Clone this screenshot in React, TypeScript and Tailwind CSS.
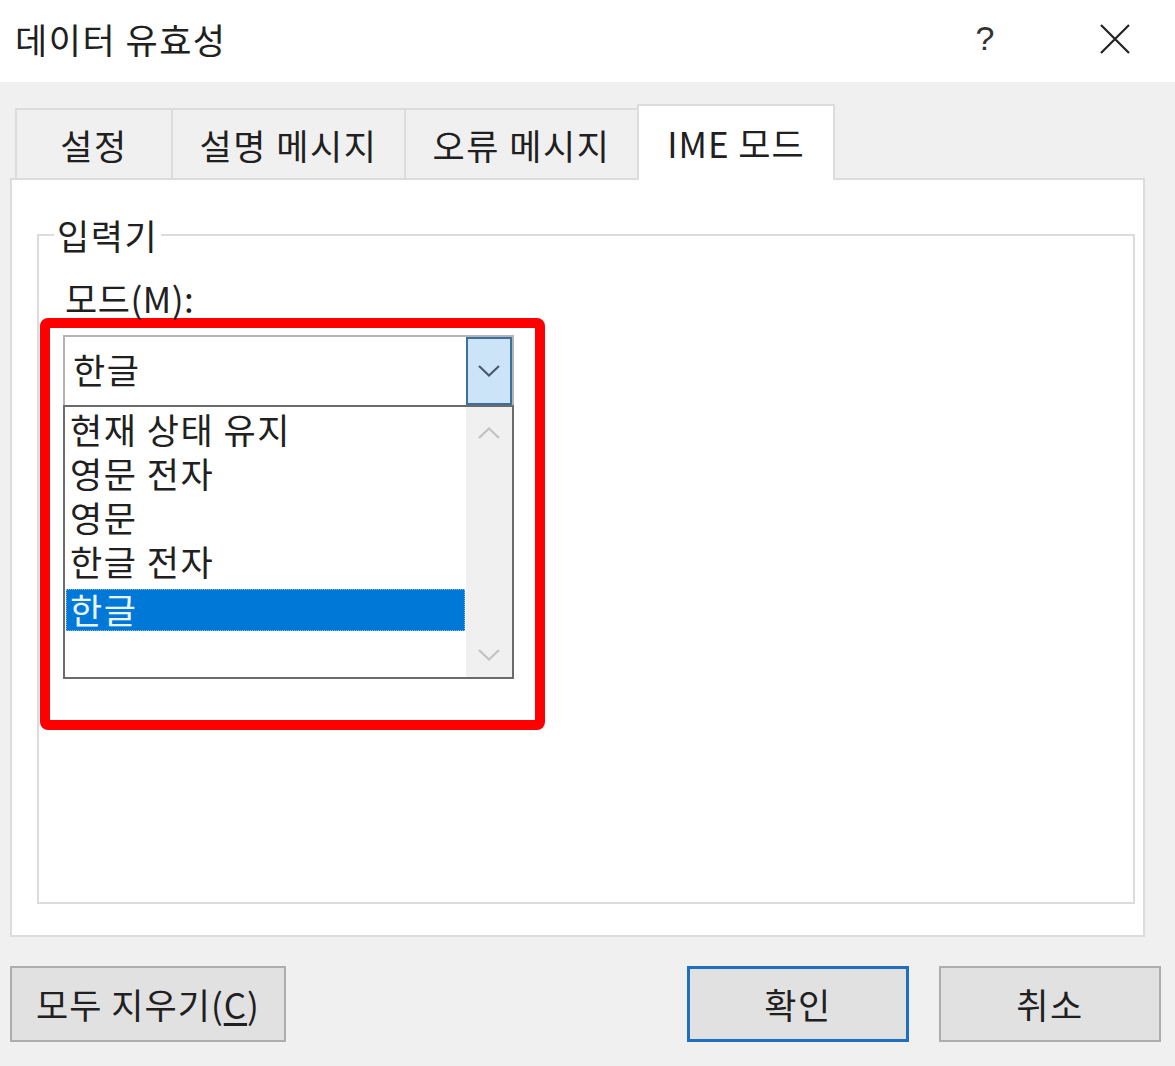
import React from "react";

function Chevron({ up = false, color = "#555", w = 22, h = 12 }: { up?: boolean; color?: string; w?: number; h?: number }) {
  return (
    <svg width={w} height={h} viewBox="0 0 22 12" fill="none">
      {up ? (
        <path d="M1 11 L11 1.5 L21 11" stroke={color} strokeWidth="2.2" />
      ) : (
        <path d="M1 1 L11 10.5 L21 1" stroke={color} strokeWidth="2.2" />
      )}
    </svg>
  );
}

export default function App() {
  const items = ["현재 상태 유지", "영문 전자", "영문", "한글 전자", "한글"];
  return (
    <div className="w-[1175px] h-[1066px] flex flex-col bg-[#f0f0f0] text-[#202020] font-['Noto_Sans_CJK_KR','Noto_Sans',sans-serif] overflow-hidden">
      {/* Title bar */}
      <div className="h-[82px] bg-white flex items-center shrink-0 pr-[45px]">
        <div className="pl-[15px] text-[35px] tracking-[1.5px] leading-none flex-1 pb-[6px]">데이터 유효성</div>
        <div className="w-[20px] text-center text-[34px] leading-none text-[#333] font-['Liberation_Sans',sans-serif] font-light pb-[6px]">?</div>
        <div className="ml-[105px] pb-[4px]">
          <svg width="30" height="30" viewBox="0 0 30 30">
            <path d="M1 1 L29 29 M29 1 L1 29" stroke="#222" strokeWidth="2.2" />
          </svg>
        </div>
      </div>

      {/* Body */}
      <div className="flex-1 flex flex-col pt-[22px]">
        <div className="pl-[10px] pr-[30px]">
          {/* Tabs */}
          <div className="flex items-end pl-[5px] h-[74px]">
            <div className="w-[156px] h-[70px] border-t-2 border-l-2 border-[#dcdcdc] flex items-center justify-center text-[35px] tracking-[1.5px] leading-none">설정</div>
            <div className="w-[233px] h-[70px] border-t-2 border-l-2 border-[#dcdcdc] flex items-center justify-center text-[35px] tracking-[1.5px] leading-none">설명 메시지</div>
            <div className="w-[233px] h-[70px] border-t-2 border-l-2 border-[#dcdcdc] flex items-center justify-center text-[35px] tracking-[1.5px] leading-none">오류 메시지</div>
            <div className="relative z-10 w-[198px] h-[76px] -mb-[2px] bg-white border-t-2 border-x-2 border-[#dcdcdc] flex items-center justify-center pb-[2px] text-[35px] tracking-[1px] leading-none">IME 모드</div>
          </div>

          {/* Panel */}
          <div className="h-[759px] bg-white border-2 border-[#dcdcdc] pt-[37px] pl-[25px] pr-[8px]">
            <fieldset className="h-[687px] border-2 border-[#dcdcdc] m-0 p-0">
              <legend className="ml-[15px] px-[3px] text-[35px] tracking-[1.5px] leading-none">입력기</legend>
              <div className="ml-[26px] mt-[28px] text-[35px] tracking-[0.5px] leading-none">모드(M):</div>

              {/* Red highlight frame */}
              <div className="ml-[1px] mt-[3px] w-[505px] border-[10px] border-[#ff0000] rounded-[8px] pt-[7px] pl-[13px] pr-[21px] pb-[41px]">
                {/* Combobox */}
                <div className="h-[70px] border-2 border-b-0 border-[#b4b4b4] flex">
                  <div className="flex-1 flex items-center pl-[8px] text-[35px] tracking-[1.5px] leading-none pb-[5px]">한글</div>
                  <div className="w-[46px] bg-[#cce4f7] border-2 border-[#3c6f9a] flex items-center justify-center">
                    <Chevron color="#4a5a6a" />
                  </div>
                </div>
                {/* List */}
                <div className="h-[274px] border-2 border-[#6b6b6b] flex">
                  <div className="flex-1 pt-[4px] px-[1px]">
                    {items.map((t, i) => {
                      const sel = i === items.length - 1;
                      return (
                        <div
                          key={t + i}
                          className={
                            sel
                              ? "mt-[2px] h-[42px] flex items-center pl-[4px] pb-[3px] text-[35px] tracking-[1.5px] leading-none bg-[#0078d7] text-[#eaf4ff] outline-1 outline-dotted outline-[#8fb8e0] -outline-offset-1"
                              : "h-[44px] flex items-center pl-[4px] pb-[9px] text-[35px] tracking-[1.5px] leading-none"
                          }
                        >
                          {t}
                        </div>
                      );
                    })}
                  </div>
                  <div className="w-[46px] bg-[#f0f0f0] flex flex-col items-center justify-between pt-[20px] pb-[16px]">
                    <Chevron up color="#c2c2c2" />
                    <Chevron color="#c2c2c2" />
                  </div>
                </div>
              </div>
            </fieldset>
          </div>
        </div>

        {/* Buttons */}
        <div className="flex mt-[29px] pl-[10px] pr-[14px]">
          <div className="w-[276px] h-[76px] bg-[#e1e1e1] border-2 border-[#adadad] flex items-center justify-center text-[35px] tracking-[1px] leading-none pb-[2px]">
            <span>
              모두 지우기(<span className="underline underline-offset-4">C</span>)
            </span>
          </div>
          <div className="ml-auto w-[222px] h-[76px] bg-[#e1e1e1] border-[3px] border-[#1f6fbf] flex items-center justify-center text-[35px] tracking-[1.5px] leading-none pb-[2px]">
            확인
          </div>
          <div className="ml-[30px] w-[222px] h-[76px] bg-[#e1e1e1] border-2 border-[#adadad] flex items-center justify-center text-[35px] tracking-[1.5px] leading-none pb-[2px]">
            취소
          </div>
        </div>
      </div>
    </div>
  );
}
